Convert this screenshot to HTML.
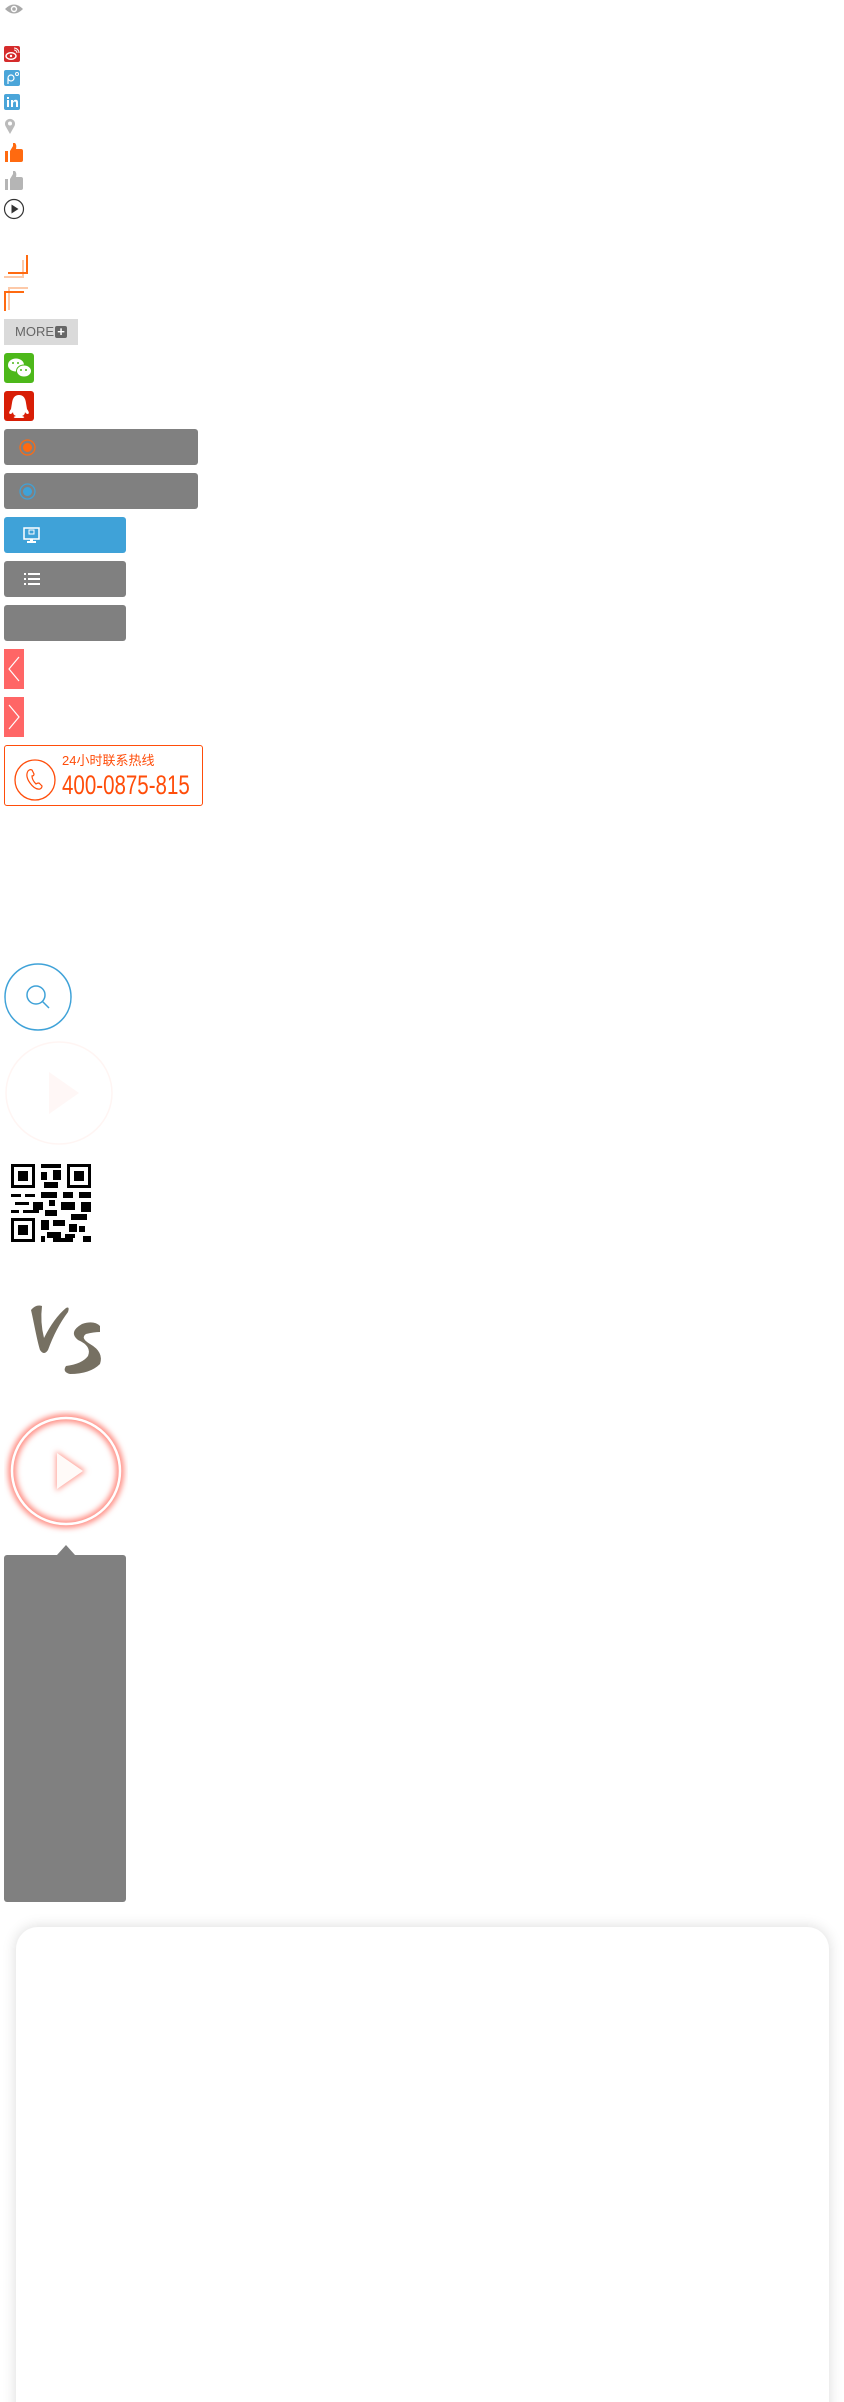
<!DOCTYPE html>
<html><head><meta charset="utf-8"><style>
html,body{margin:0;padding:0;background:#fff;width:844px;height:2402px;overflow:hidden;position:relative;font-family:"Liberation Sans","Noto Sans CJK SC",sans-serif}
.a{position:absolute}
.btn{position:absolute;left:4px;background:#808080;border-radius:3px;height:36px}
</style></head><body>
<svg class="a" style="left:4px;top:3px" width="20" height="12" viewBox="0 0 20 12"><path d="M1 6Q10 -3 19 6Q10 15 1 6Z" fill="#aaa"/><circle cx="10" cy="6" r="3.2" fill="#fff"/><circle cx="10" cy="6" r="1.8" fill="#aaa"/></svg>
<div class="a" style="left:4px;top:46px;width:16px;height:16px;background:#d52b2b;border-radius:2px"></div>
<svg class="a" style="left:4px;top:46px" width="16" height="16"><ellipse cx="7" cy="10" rx="5" ry="3.3" fill="none" stroke="#fff" stroke-width="1.4"/><circle cx="7" cy="10" r="1.2" fill="#fff"/><path d="M10 4a3 3 0 0 1 3 3M10 2a5 5 0 0 1 5 5" stroke="#fff" fill="none"/></svg>
<div class="a" style="left:4px;top:70px;width:16px;height:16px;background:#4aa5d9;border-radius:2px"></div>
<svg class="a" style="left:4px;top:70px" width="16" height="16"><circle cx="7" cy="8" r="3" fill="none" stroke="#fff" stroke-width="1.2"/><path d="M4 8v6" stroke="#fff" stroke-width="1.2"/><circle cx="13" cy="4" r="1.5" fill="none" stroke="#fff"/></svg>
<div class="a" style="left:4px;top:94px;width:16px;height:16px;background:#4aa5d9;border-radius:2px"></div>
<svg class="a" style="left:4px;top:94px" width="16" height="16"><rect x="3" y="6" width="2" height="7" fill="#fff"/><rect x="3" y="3" width="2" height="2" fill="#fff"/><path d="M7 6h2v1.5q1-1.7 2.7-1.7Q14 5.8 14 8.5V13h-2V9q0-1.5-1.2-1.5T9 9v4H7Z" fill="#fff"/></svg>
<svg class="a" style="left:4px;top:118px" width="12" height="17"><path d="M6 16L1.5 8A5 5 0 1 1 10.5 8Z" fill="#bbb"/><circle cx="6" cy="5.5" r="2" fill="#fff"/></svg>
<svg class="a" style="left:4px;top:143px" width="19" height="20"><rect x="1" y="8" width="3" height="11" fill="#ff6a10"/><path d="M6 8L9 3V0h2q2 2 1 6h5q2 0 2 2v9q0 2-2 2H6Z" fill="#ff6a10"/></svg>
<svg class="a" style="left:4px;top:171px" width="19" height="20"><rect x="1" y="8" width="3" height="11" fill="#b5b5b5"/><path d="M6 8L9 3V0h2q2 2 1 6h5q2 0 2 2v9q0 2-2 2H6Z" fill="#b5b5b5"/></svg>
<svg class="a" style="left:3px;top:198px" width="22" height="22"><circle cx="11" cy="11" r="9.5" fill="none" stroke="#333" stroke-width="1.2"/><path d="M8.5 6.5L15.5 11L8.5 15.5Z" fill="#333"/></svg>
<svg class="a" style="left:4px;top:255px" width="26" height="57"><path d="M0 22H19V5" fill="none" stroke="#fdc9a8" stroke-width="2"/><path d="M4 18H23V0" fill="none" stroke="#ff6a10" stroke-width="2"/><path d="M5 55V33H24" fill="none" stroke="#fdc9a8" stroke-width="2"/><path d="M1 56V37H20" fill="none" stroke="#ff6a10" stroke-width="2"/></svg>
<div class="a" style="left:4px;top:319px;width:74px;height:26px;background:#dadada;color:#666;font-size:13px;line-height:26px;"><span style="position:absolute;left:11px">MORE</span><span style="position:absolute;left:51px;top:7px;width:12px;height:12px;background:#666;border-radius:2px;color:#fff;font-size:13px;line-height:12px;text-align:center;font-weight:bold">+</span></div>
<div class="a" style="left:4px;top:353px;width:30px;height:30px;background:#4db81a;border-radius:3px"></div>
<svg class="a" style="left:4px;top:353px" width="30" height="30"><ellipse cx="12" cy="12" rx="8" ry="6.5" fill="#fff"/><ellipse cx="20" cy="18" rx="7.5" ry="6" fill="#fff" stroke="#4db81a"/><circle cx="9" cy="10" r="1" fill="#4db81a"/><circle cx="14" cy="10" r="1" fill="#4db81a"/><circle cx="17" cy="17" r="1" fill="#4db81a"/><circle cx="22" cy="17" r="1" fill="#4db81a"/></svg>
<div class="a" style="left:4px;top:391px;width:30px;height:30px;background:#d81e06;border-radius:3px"></div>
<svg class="a" style="left:4px;top:391px" width="30" height="30"><path d="M15 4q6 0 7 8l1 6q3 4 1 5q-2 0-3-2q0 3-3 4q4 1 1 2H11q-3-1 1-2q-3-1-3-4q-1 2-3 2q-2-1 1-5l1-6q1-8 7-8Z" fill="#fff"/></svg>
<div class="btn" style="top:429px;width:194px"><svg class="a" style="left:15px;top:10px" width="17" height="17"><circle cx="8.5" cy="8.5" r="7.5" fill="none" stroke="#ff6a10" stroke-width="1.2"/><circle cx="8.5" cy="8.5" r="4.5" fill="#ff6a10"/></svg></div>
<div class="btn" style="top:473px;width:194px"><svg class="a" style="left:15px;top:10px" width="17" height="17"><circle cx="8.5" cy="8.5" r="7.5" fill="none" stroke="#3fa2d8" stroke-width="1.2"/><circle cx="8.5" cy="8.5" r="4.5" fill="#3fa2d8"/></svg></div>
<div class="btn" style="top:517px;width:122px;background:#3fa2d8"><svg class="a" style="left:19px;top:10px" width="18" height="17"><rect x="1" y="1" width="15" height="11" fill="none" stroke="#fff" stroke-width="1.5"/><rect x="7" y="12" width="3" height="3" fill="#fff"/><rect x="4" y="14" width="9" height="2" fill="#fff"/><rect x="6" y="3" width="5" height="4" fill="none" stroke="#fff"/></svg></div>
<div class="btn" style="top:561px;width:122px"><svg class="a" style="left:20px;top:12px" width="17" height="13"><rect x="0" y="0" width="2" height="2" fill="#fff"/><rect x="0" y="5" width="2" height="2" fill="#fff"/><rect x="0" y="10" width="2" height="2" fill="#fff"/><rect x="4" y="0" width="12" height="2" fill="#fff"/><rect x="4" y="5" width="12" height="2" fill="#fff"/><rect x="4" y="10" width="12" height="2" fill="#fff"/></svg></div>
<div class="btn" style="top:605px;width:122px"></div>
<div class="a" style="left:4px;top:649px;width:20px;height:40px;background:#ff6666"><svg width="20" height="40"><path d="M15 8L5 20L15 32" fill="none" stroke="#fff" stroke-width="1.2"/></svg></div>
<div class="a" style="left:4px;top:697px;width:20px;height:40px;background:#ff6666"><svg width="20" height="40"><path d="M5 8L15 20L5 32" fill="none" stroke="#fff" stroke-width="1.2"/></svg></div>
<div class="a" style="left:4px;top:745px;width:197px;height:59px;border:1px solid #ff4d0a;border-radius:3px"></div>
<svg class="a" style="left:14px;top:759px" width="44" height="44"><circle cx="21" cy="21" r="20" fill="none" stroke="#ff4d0a" stroke-width="1.3"/><path d="M14 12q2-2 4-1l2 4q0 2-2 2q0 4 4 8q1-1 3-1l3 3q0 2-2 3q-5 1-10-6t-2-12Z" fill="none" stroke="#ff4d0a" stroke-width="1.2"/></svg>
<div class="a" style="left:62px;top:750px;font-size:13px;color:#ff4d0a;white-space:nowrap">24小时联系热线</div>
<div class="a" style="left:62px;top:770px;font-size:27px;color:#ff4d0a;white-space:nowrap;transform:scaleX(0.76);transform-origin:0 0">400-0875-815</div>
<svg class="a" style="left:4px;top:963px" width="68" height="68"><circle cx="34" cy="34" r="33" fill="none" stroke="#3fa2d8" stroke-width="1.5"/><circle cx="32" cy="32" r="9" fill="none" stroke="#3fa2d8" stroke-width="1.5"/><path d="M38.5 38.5L45 45" stroke="#3fa2d8" stroke-width="1.5"/></svg>
<svg class="a" style="left:4px;top:1040px" width="110" height="106"><ellipse cx="55" cy="53" rx="53" ry="51" fill="none" stroke="#fff5f3" stroke-width="1.5"/><path d="M45 32L75 53L45 74Z" fill="#fff7f6"/></svg>
<svg class="a" style="left:11px;top:1164px" width="80" height="78" viewBox="0 0 80 78" shape-rendering="crispEdges">
<rect x="0" y="0" width="24" height="24" fill="#000"/><rect x="3" y="3" width="18" height="18" fill="#fff"/><rect x="7" y="7" width="10" height="10" fill="#000"/>
<rect x="56" y="0" width="24" height="24" fill="#000"/><rect x="59" y="3" width="18" height="18" fill="#fff"/><rect x="63" y="7" width="10" height="10" fill="#000"/>
<rect x="0" y="54" width="24" height="24" fill="#000"/><rect x="3" y="57" width="18" height="18" fill="#fff"/><rect x="7" y="61" width="10" height="10" fill="#000"/>
<rect x="30" y="0" width="20" height="4" fill="#000"/><rect x="30" y="8" width="6" height="8" fill="#000"/><rect x="42" y="6" width="8" height="10" fill="#000"/><rect x="33" y="18" width="14" height="6" fill="#000"/>
<rect x="0" y="30" width="10" height="3" fill="#000"/><rect x="14" y="30" width="10" height="3" fill="#000"/><rect x="30" y="28" width="16" height="6" fill="#000"/><rect x="52" y="28" width="10" height="6" fill="#000"/><rect x="68" y="28" width="12" height="6" fill="#000"/>
<rect x="4" y="38" width="14" height="3" fill="#000"/><rect x="22" y="38" width="10" height="8" fill="#000"/><rect x="38" y="36" width="6" height="6" fill="#000"/><rect x="50" y="38" width="14" height="8" fill="#000"/><rect x="70" y="38" width="10" height="10" fill="#000"/>
<rect x="0" y="46" width="8" height="3" fill="#000"/><rect x="12" y="46" width="16" height="3" fill="#000"/><rect x="34" y="46" width="12" height="6" fill="#000"/><rect x="60" y="50" width="16" height="6" fill="#000"/>
<rect x="30" y="56" width="8" height="10" fill="#000"/><rect x="42" y="56" width="12" height="6" fill="#000"/><rect x="58" y="60" width="8" height="8" fill="#000"/><rect x="36" y="68" width="14" height="6" fill="#000"/><rect x="54" y="70" width="10" height="4" fill="#000"/><rect x="68" y="62" width="6" height="6" fill="#000"/><rect x="30" y="72" width="4" height="6" fill="#000"/><rect x="72" y="72" width="8" height="6" fill="#000"/><rect x="42" y="74" width="20" height="4" fill="#000"/>
</svg>
<svg class="a" style="left:28px;top:1304px" width="78" height="72"><path d="M3 6Q8 0 14 2Q12 18 16 34Q26 14 38 4Q42 2 40 8Q28 24 20 46Q16 52 12 46Q10 40 6 20Q4 10 3 6Z" fill="#767062"/><path d="M72 22Q66 16 54 20Q40 28 50 36Q64 42 60 52Q54 60 38 62Q34 68 42 70Q62 70 72 60Q76 48 62 40Q52 34 58 30Q66 28 72 28Z" fill="#767062"/></svg>
<svg class="a" style="left:4px;top:1410px" width="124" height="124"><defs><filter id="g" x="-30%" y="-30%" width="160%" height="160%"><feGaussianBlur stdDeviation="3"/></filter></defs>
<ellipse cx="62" cy="61" rx="54" ry="53" fill="none" stroke="#ff8a80" stroke-width="8" filter="url(#g)"/>
<ellipse cx="62" cy="61" rx="54" ry="53" fill="none" stroke="#fff" stroke-width="2.5"/>
<path d="M52 41L82 61L52 81Z" fill="#ff9a90" filter="url(#g)"/>
<path d="M53 43L79 61L53 79Z" fill="#fffaf8"/></svg>
<div class="a" style="left:57px;top:1545px;width:0;height:0;border-left:9px solid transparent;border-right:9px solid transparent;border-bottom:10px solid #808080"></div>
<div class="a" style="left:4px;top:1555px;width:122px;height:347px;background:#808080;border-radius:3px"></div>
<div class="a" style="left:16px;top:1927px;width:813px;height:520px;background:#fff;border-radius:22px;box-shadow:0 0 14px rgba(0,0,0,0.15)"></div>
</body></html>
